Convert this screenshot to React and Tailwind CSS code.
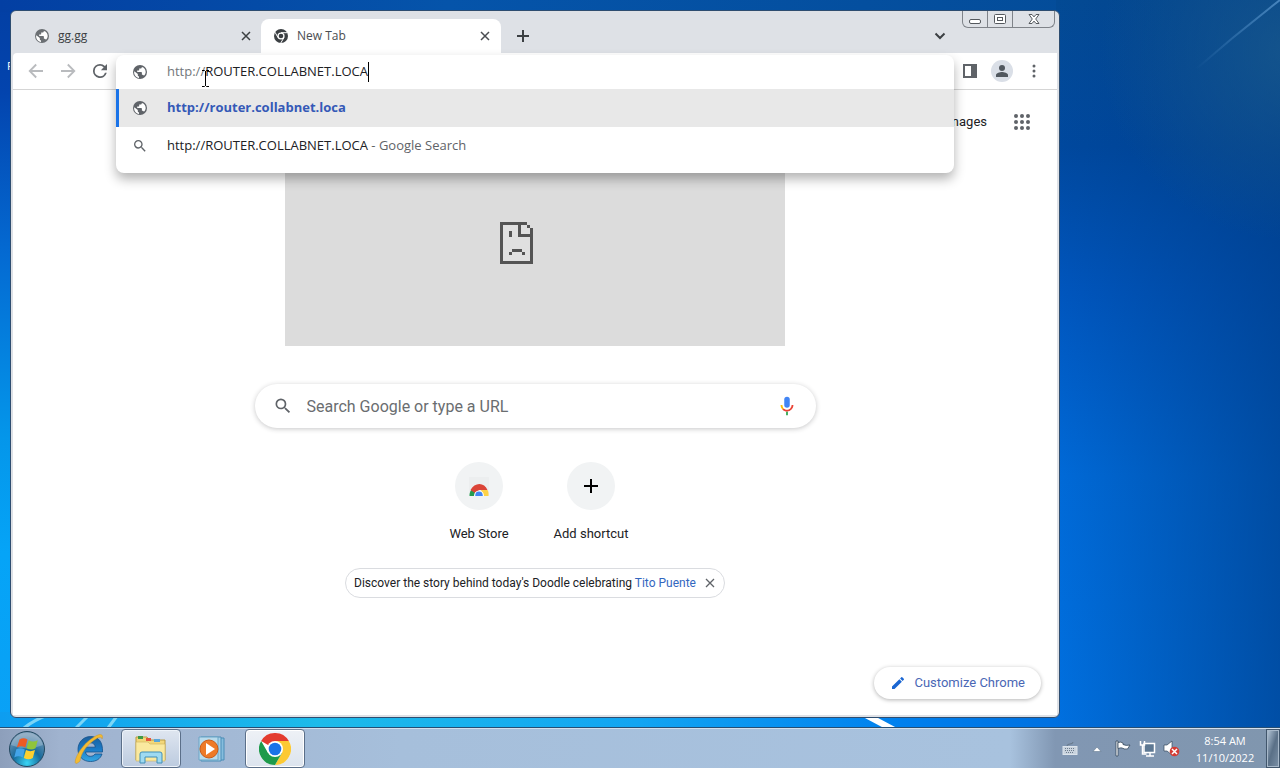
import React from "react";

const ui = "font-['Open_Sans','Noto_Sans',sans-serif]";

function Globe({ className }) {
  return (
    <svg viewBox="0 0 16 16" className={className} aria-hidden="true">
      <circle cx="8" cy="8" r="7" fill="currentColor" />
      <path d="M2.300 7.200 5.800 10v1.200c0 .7.500 1.200 1.200 1.200v1.500C4.100 13.500 2.100 11 2.100 8.200zM9.800 2.400v.8c0 .8-.6 1.300-1.300 1.300H7.200v1.400c0 .4-.3.7-.7.700H5.200v1.400h4c.4 0 .7.300.7.700v2h.6c.7 0 1.200.4 1.400 1 1.100-1 1.800-2.200 1.800-3.700 0-2.400-1.600-4.600-3.900-4.900z" fill="#fff" />
    </svg>
  );
}

function ChromeGlyph({ className }) {
  return (
    <svg viewBox="0 0 16 16" className={className} aria-hidden="true">
      <circle cx="8" cy="8" r="7" fill="#3c4043" />
      <circle cx="8" cy="8" r="3.600" fill="#fff" />
      <circle cx="8" cy="8" r="2.300" fill="#3c4043" />
      <path d="M8 4.700h6.300M5.100 9.700 2 4.200M10.900 9.700l-3.200 5.400" stroke="#fff" strokeWidth="1" fill="none" />
    </svg>
  );
}

function ChromeLogo({ className }) {
  return (
    <svg viewBox="0 0 32 32" className={className} aria-hidden="true">
      <circle cx="16" cy="16" r="16" fill="#fff" />
      <path d="M16 16 2.140 8A16 16 0 0 1 29.860 8z" fill="#e33b2e" />
      <path d="M16 8h13.860A16 16 0 0 1 16 32l6.930-12z" fill="#fcc934" />
      <path d="M22.930 20 16 32A16 16 0 0 1 2.140 8l6.930 12z" fill="#1e9a4b" />
      <circle cx="16" cy="16" r="8" fill="#fff" />
      <circle cx="16" cy="16" r="6.300" fill="#1a73e8" />
    </svg>
  );
}

function Magnifier({ className }) {
  return (
    <svg viewBox="0 0 24 24" className={className} fill="currentColor" aria-hidden="true">
      <path d="M15.500 14h-.79l-.28-.27A6.470 6.470 0 0 0 16 9.500 6.500 6.500 0 1 0 9.500 16c1.610 0 3.090-.59 4.230-1.570l.27.28v.79l5 4.990L20.490 19l-4.990-5zm-6 0C7.010 14 5 11.990 5 9.500S7.010 5 9.500 5 14 7.010 14 9.500 11.990 14 9.500 14z" />
    </svg>
  );
}

function Cross({ className }) {
  return (
    <svg viewBox="0 0 10 10" className={className} stroke="currentColor" aria-hidden="true">
      <path d="M1 1l8 8M9 1 1 9" />
    </svg>
  );
}

function Arrow({ className }) {
  return (
    <svg viewBox="0 0 16 16" className={className} fill="none" stroke="currentColor" strokeWidth="1.800" aria-hidden="true">
      <path d="M15 8H2M8.200 1.500 1.700 8l6.500 6.500" />
    </svg>
  );
}

function Wallpaper() {
  return (
    <svg className="absolute inset-0 h-full w-full" viewBox="0 0 1280 768" preserveAspectRatio="none" aria-hidden="true">
      <defs>
        <linearGradient id="base" x1="0" y1="0" x2="0" y2="1">
          <stop offset="0" stopColor="#033fa3" />
          <stop offset="0.120" stopColor="#0344ae" />
          <stop offset="0.330" stopColor="#046ad2" />
          <stop offset="0.570" stopColor="#0496ea" />
          <stop offset="0.720" stopColor="#05a4f7" />
          <stop offset="1" stopColor="#0ba0f5" />
        </linearGradient>
        <linearGradient id="top" x1="0" y1="0" x2="1" y2="0">
          <stop offset="0" stopColor="#033fa3" />
          <stop offset="0.350" stopColor="#0554aa" />
          <stop offset="1" stopColor="#034a94" />
        </linearGradient>
        <linearGradient id="side" x1="0" y1="0" x2="0" y2="1">
          <stop offset="0" stopColor="#034a94" />
          <stop offset="0.200" stopColor="#00489e" />
          <stop offset="0.400" stopColor="#0056be" />
          <stop offset="0.650" stopColor="#006ad8" />
          <stop offset="1" stopColor="#0070e0" />
        </linearGradient>
        <linearGradient id="edge" x1="0" y1="0" x2="1" y2="0">
          <stop offset="0" stopColor="#003c86" stopOpacity="0" />
          <stop offset="1" stopColor="#003c86" stopOpacity="0.650" />
        </linearGradient>
        <radialGradient id="glow" gradientUnits="userSpaceOnUse" cx="1290" cy="50" r="190">
          <stop offset="0" stopColor="#1c5c8c" stopOpacity="0.700" />
          <stop offset="1" stopColor="#1c5c8c" stopOpacity="0" />
        </radialGradient>
        <linearGradient id="ray" gradientUnits="userSpaceOnUse" x1="1195" y1="68" x2="1280" y2="0">
          <stop offset="0" stopColor="#5f9bd2" stopOpacity="0" />
          <stop offset="1" stopColor="#5f9bd2" />
        </linearGradient>
        <linearGradient id="low" x1="0" y1="0" x2="1" y2="0">
          <stop offset="0" stopColor="#0d9df0" />
          <stop offset="0.300" stopColor="#1dbbea" />
          <stop offset="0.600" stopColor="#12a5f2" />
          <stop offset="0.850" stopColor="#0080ee" />
          <stop offset="1" stopColor="#0070e0" />
        </linearGradient>
      </defs>
      <rect width="1280" height="768" fill="url(#base)" />
      <rect width="1280" height="12" fill="url(#top)" />
      <rect y="712" width="1060" height="20" fill="url(#low)" />
      <rect x="1056" width="224" height="732" fill="url(#side)" />
      <rect x="1056" width="224" height="732" fill="url(#edge)" />
      <rect x="1056" width="224" height="732" fill="url(#glow)" />
      <path d="M1195 70Q1236 34 1280 0" stroke="url(#ray)" strokeWidth="2" fill="none" opacity="0.700" />
      <path d="M24 728Q34 720 50 714M108 728l9-12M76 728l12-12" stroke="#a9eafa" strokeWidth="3" fill="none" opacity="0.700" />
      <path d="M864 714l32 17" stroke="#fff" strokeWidth="6" />
    </svg>
  );
}

function TabStrip() {
  return (
    <header className="flex h-[42px] items-end pl-[7px]">
      <div className="flex h-[34px] w-[241px] items-center gap-2 pr-[7px] pl-[14px] text-[#3c4043]">
        <Globe className="size-4 text-[#6b6f73]" />
        <span className={`flex-1 text-xs ${ui}`}>gg.gg</span>
        <button aria-label="Close gg.gg" className="grid size-4 place-items-center">
          <Cross className="size-[10px] stroke-[1.500]" />
        </button>
      </div>
      <div className="flex h-[34px] w-[240px] items-center gap-2 rounded-t-lg bg-white pr-2 pl-3 text-[#4a4d51]">
        <ChromeGlyph className="size-4" />
        <span className={`flex-1 text-xs ${ui}`}>New Tab</span>
        <button aria-label="Close New Tab" className="grid size-4 place-items-center">
          <Cross className="size-[10px] stroke-[1.500]" />
        </button>
      </div>
      <button aria-label="New tab" className="ml-2 grid h-[34px] w-7 place-items-center text-[#3c4043]">
        <svg viewBox="0 0 12 12" className="size-3 stroke-current stroke-2"><path d="M6 0v12M0 6h12" /></svg>
      </button>
      <div className="flex-1" />
      <button aria-label="Search tabs" className="grid h-[34px] w-7 place-items-center text-[#3c4043]">
        <svg viewBox="0 0 12 8" className="h-2 w-3 fill-none stroke-current stroke-2"><path d="M1.500 1.500 6 6l4.500-4.500" /></svg>
      </button>
      <div className="mr-[2px] ml-2 flex h-[17px] self-start rounded-b-md border border-t-0 border-[#7f8389] text-[#55595e]">
        <button aria-label="Minimize" className="grid w-[25px] place-items-center border-r border-[#7f8389]">
          <svg viewBox="0 0 14 12" className="h-3 w-[14px] fill-white stroke-current"><rect x="1.500" y="6.500" width="11" height="4" rx="1.500" /></svg>
        </button>
        <button aria-label="Maximize" className="grid w-[25px] place-items-center border-r border-[#7f8389]">
          <svg viewBox="0 0 14 12" className="h-3 w-[14px] fill-white stroke-current"><rect x="1.500" y="1.500" width="11" height="9" rx="1" /><rect x="4.500" y="4.500" width="5" height="3" /></svg>
        </button>
        <button aria-label="Close window" className="grid w-[41px] place-items-center">
          <svg viewBox="0 0 12 12" className="size-3 fill-white stroke-current"><path d="M1 1.500h3l2 2.400 2-2.400h3L7.700 6l3.300 4.500H8L6 8.100l-2 2.400H1L4.300 6z" /></svg>
        </button>
      </div>
    </header>
  );
}

function Omnibox() {
  return (
    <div className="relative h-full flex-1">
      <div className={`absolute inset-x-0 top-[2px] z-10 rounded-lg bg-white pb-2 text-[13px] text-[#202124] shadow-[0_6px_12px_rgba(0,0,0,0.3)] ${ui}`}>
        <label className="flex h-[34px] items-center gap-[19px] pr-4 pb-px pl-4">
          <Globe className="size-4 text-[#5f6368]" />
          <span className="relative flex-1">
            <span aria-hidden="true" className="pointer-events-none absolute inset-0 flex items-center">
              <span className="text-[#73777b]">http://</span>ROUTER.COLLABNET.LOCA<span className="h-5 w-px bg-black" />
            </span>
            <input aria-label="Address and search bar" defaultValue="http://ROUTER.COLLABNET.LOCA" className="block w-full bg-transparent text-transparent outline-none" />
          </span>
        </label>
        <a href="#go" className="flex h-[38px] items-center gap-[19px] border-l-3 border-[#1a73e8] bg-[#e8e8e8] pl-[13px] font-bold text-[#3559b7]">
          <Globe className="size-4 text-[#5f6368]" />
          http://router.collabnet.loca
        </a>
        <a href="#search" className="flex h-[38px] items-center gap-[19px] pl-4">
          <Magnifier className="size-4 text-[#5f6368]" />
          <span>http://ROUTER.COLLABNET.LOCA <span className="text-[#5f6368]">- Google Search</span></span>
        </a>
      </div>
      <svg viewBox="0 0 9 17" className="absolute top-[17px] left-[85px] z-20 h-[17px] w-[9px]" fill="none" stroke="#000" aria-hidden="true">
        <path d="M1 .5h2.500l1 1 1-1H8M4.500 1v15M1 16.500h2.500l1-1 1 1H8" />
      </svg>
    </div>
  );
}

function Toolbar() {
  return (
    <nav className="flex h-[37px] items-center rounded-tl border-b border-[#d5d5d5] bg-white pl-[7px] text-[#5f6368]">
      <button aria-label="Back" className="grid w-8 place-items-center text-[#b9bbbe]"><Arrow className="size-4" /></button>
      <button aria-label="Forward" className="grid w-8 place-items-center text-[#b9bbbe]"><Arrow className="size-4 rotate-180" /></button>
      <button aria-label="Reload" className="grid w-8 place-items-center">
        <svg viewBox="4 4 16 16" className="size-[14px] fill-current"><path d="M17.650 6.350A7.950 7.950 0 0 0 12 4a8 8 0 1 0 7.730 10h-2.080A6 6 0 1 1 12 6c1.660 0 3.140.69 4.220 1.780L13 11h7V4z" /></svg>
      </button>
      <Omnibox />
      <button aria-label="Side panel" className="grid w-8 place-items-center">
        <svg viewBox="0 0 14 14" className="size-[14px]"><path fill="currentColor" fillRule="evenodd" d="M0 0h14v14H0zM2 2v10h6V2z" /></svg>
      </button>
      <button aria-label="Profile" className="grid w-8 place-items-center">
        <span className="grid size-[22px] place-items-center rounded-full bg-[#dadfe7]">
          <svg viewBox="0 0 14 14" className="size-[14px] fill-[#51585f]"><circle cx="7" cy="4" r="3" /><path d="M1 13v-2c0-2 4-3 6-3s6 1 6 3v2z" /></svg>
        </span>
      </button>
      <button aria-label="Menu" className="mr-[7px] grid w-8 place-items-center">
        <svg viewBox="0 0 4 14" className="h-[14px] w-1 fill-current"><circle cx="2" cy="2" r="1.500" /><circle cx="2" cy="7" r="1.500" /><circle cx="2" cy="12" r="1.500" /></svg>
      </button>
    </nav>
  );
}

function NewTabPage() {
  return (
    <main className="flex flex-1 flex-col items-center bg-white font-[Roboto,sans-serif] text-[13px] text-[#202124]">
      <div className="flex h-[64px] w-full items-center justify-end gap-[27px] pr-[27px]">
        <a href="#images">Images</a>
        <button aria-label="Google apps">
          <svg viewBox="0 0 16 16" className="size-4 fill-[#5f6368]">
            {[2, 8, 14].map((y) => [2, 8, 14].map((x) => <circle key={`${x}-${y}`} cx={x} cy={y} r="2" />))}
          </svg>
        </button>
      </div>
      <div className="flex h-[192px] w-[500px] justify-center bg-[#dcdcdc] pt-[67px] pr-[38px]">
        <svg viewBox="0 0 33 44" className="h-[44px] w-[33px]" shapeRendering="crispEdges" aria-hidden="true">
          <path d="M0 1h27v3h3v3h3v36H0z" fill="#545454" />
          <path d="M3 4h15v12h12v24H3z" fill="#e0e0e0" />
          <path d="M21 4h6v3h3v6h-9z" fill="#e0e0e0" />
          <path d="M9 10h3v6H9zM12 28h10v3H12zM9 31h3v3H9zM22 31h3v3h-3z" fill="#545454" />
        </svg>
      </div>
      <label className="mt-[38px] flex h-[44px] w-[561px] items-center gap-[14px] rounded-full bg-white px-[18px] shadow-[0_1px_5px_rgba(32,33,36,0.25)]">
        <Magnifier className="size-5 text-[#5f6368]" />
        <input aria-label="Search" placeholder="Search Google or type a URL" className="min-w-0 flex-1 pt-[2px] text-base outline-none placeholder:text-[#6a6d70]" />
        <button aria-label="Search by voice">
          <svg viewBox="0 0 24 24" className="size-[22px]">
            <rect x="9" y="2" width="6" height="12" rx="3" fill="#4285f4" />
            <path d="M11 18h2v4h-2z" fill="#34a853" />
            <path d="M5 11h2c0 1.500.5 2.700 1.500 3.600L7 16c-1.200-1.300-2-3-2-5z" fill="#fbbc04" />
            <path d="M7 16l1.500-1.400c2 2 5 1.900 7 0 1-1 1.500-2.100 1.500-3.600h2c0 3.900-3.100 7-7 7-2 0-3.700-.7-5-2z" fill="#ea4335" />
          </svg>
        </button>
      </label>
      <div className="mt-[34px] flex">
        <a href="#store" className="flex w-28 flex-col items-center gap-[14px]">
          <span className="grid size-12 place-items-center rounded-full bg-[#f1f3f4]">
            <svg viewBox="0 0 24 24" className="size-6" aria-hidden="true">
              <path d="M2 3h20v15a3 3 0 0 1-3 3H5a3 3 0 0 1-3-3z" fill="#eceeef" />
              <path d="M2.500 22a10 10 0 0 1 3.500-8l3 5-1 3z" fill="#259b50" />
              <path d="M3.500 16C7.500 8 17.500 8 20.500 16h-8l-4.500 3z" fill="#db4437" />
              <path d="M14 16h6.500c1 1.500 1.300 3.500 1 6H16z" fill="#fdd248" />
              <path d="M7 22a5 5.500 0 0 1 10 0z" fill="#fff" />
              <path d="M8.200 22a3.800 4.400 0 0 1 7.600 0z" fill="#4285f4" />
            </svg>
          </span>
          <span className="leading-5">Web Store</span>
        </a>
        <button className="flex w-28 flex-col items-center gap-[14px]">
          <span className="grid size-12 place-items-center rounded-full bg-[#f1f3f4]">
            <svg viewBox="0 0 14 14" className="size-[14px] stroke-black stroke-2"><path d="M7 0v14M0 7h14" /></svg>
          </span>
          <span className="leading-5">Add shortcut</span>
        </button>
      </div>
      <div className="mt-[24px] flex h-[30px] items-center rounded-full border border-[#dadce0] px-2 text-xs">
        <span>Discover the story behind today's Doodle celebrating <a href="#doodle" className="text-[#3367c0]">Tito Puente</a></span>
        <button aria-label="Dismiss" className="ml-2 grid size-3 place-items-center text-[#5f6368]"><Cross className="size-[10px] stroke-[1.300]" /></button>
      </div>
      <button className="mt-auto mr-4 mb-4 flex h-8 items-center gap-2 self-end rounded-full bg-white px-4 text-[#4a67b5] shadow-[0_1px_4px_rgba(0,0,0,0.3)]">
        <svg viewBox="0 0 24 24" className="size-4 fill-[#1a66d2]"><path d="M3 17.250V21h3.750L17.810 9.940l-3.750-3.750zM20.710 7.040a1 1 0 0 0 0-1.410l-2.340-2.340a1 1 0 0 0-1.410 0l-1.830 1.830 3.750 3.750z" /></svg>
        Customize Chrome
      </button>
    </main>
  );
}

function StartOrb() {
  return (
    <svg viewBox="0 0 38 38" className="size-[38px]" aria-hidden="true">
      <defs>
        <radialGradient id="orb" cx="0.500" cy="0.900" r="0.800">
          <stop offset="0" stopColor="#39d5f5" />
          <stop offset="0.500" stopColor="#176b9c" />
          <stop offset="1" stopColor="#6f94b3" />
        </radialGradient>
      </defs>
      <circle cx="19" cy="19" r="17.500" fill="url(#orb)" stroke="#23485f" />
      <path d="M3 15a16.500 16.500 0 0 1 32 0Q19 22 3 15z" fill="#fff" opacity="0.250" />
      <path d="M11.500 9.500q4-2.500 8 0l-2.200 8q-4-2.300-8.500 0z" fill="#ee5a24" />
      <path d="M20.800 10.200q4 2.500 9 0l-2.300 8q-4 2.500-9 0z" fill="#8fc43c" />
      <path d="M8.300 19.200q4-2.200 8.500.2L14.700 27.500q-4-2.300-8.500 0z" fill="#43a4e8" />
      <path d="M18 20q4 2.300 9 0l-2.200 8q-4 2.500-9 0z" fill="#fcd02f" />
    </svg>
  );
}

function Taskbar() {
  return (
    <footer className="relative flex h-10 items-center border-t border-[#d3e0ed] bg-[linear-gradient(90deg,#8d9fbb_0px,#a0b3cf_60px,#a6bfdb_400px,#a8c2de_calc(100%-270px),#8197b3_calc(100%-225px),#8096ae_100%)] shadow-[0_-1px_0_#254e74]">
      <button aria-label="Start" className="ml-2"><StartOrb /></button>
      <button aria-label="Internet Explorer" className="ml-6 grid w-[38px] place-items-center">
        <svg viewBox="0 0 34 34" className="size-[34px]" aria-hidden="true">
          <defs>
            <linearGradient id="ie" x1="0" y1="0" x2="0" y2="1">
              <stop offset="0" stopColor="#1c5f9c" />
              <stop offset="0.500" stopColor="#1a7ac6" />
              <stop offset="1" stopColor="#35a7e2" />
            </linearGradient>
          </defs>
          <path d="M30.500 20H13.500c.5 3 2.500 4.300 5 4.300 2 0 3.500-.8 4.500-2.300h7c-1.500 5-6 7.500-11.500 7.500-7.500 0-12.500-5-12.500-12s5-13 12.700-13C26.500 4.500 31 10 30.500 20zM13.500 15.200h9.800c-.3-3-2.200-4.400-4.800-4.400-2.700 0-4.500 1.400-5 4.400z" fill="url(#ie)" stroke="#14508a" strokeWidth=".8" />
          <path d="M8 29C-2 39 4 16 22 5c6-4 10-3 8 2 0-3-4-2-9 2C13 15 9 22 8 29z" fill="#f3bb32" stroke="#c9952d" strokeWidth=".5" />
        </svg>
      </button>
      <button aria-label="Windows Explorer" className="ml-[13px] grid h-[39px] w-[60px] place-items-center rounded-sm border border-[#5b6f89] bg-gradient-to-b from-[#dfe6f0] to-[#bccbdf] shadow-[inset_0_0_0_1px_#edf3fa]">
        <svg viewBox="0 0 34 30" className="h-[30px] w-[34px]" aria-hidden="true">
          <path d="M2 3h11l2 3h16v20H2z" fill="#f3d77a" stroke="#b99b45" />
          <path d="M4 2h5v3H4z" fill="#3f9a46" /><path d="M12 4h5v3h-5z" fill="#e4533c" /><path d="M20 5h6v3h-6z" fill="#5aa6d8" />
          <path d="M2 8h12l2 2h15v17H2z" fill="#fae99f" stroke="#cdb25b" strokeWidth=".6" />
          <path d="M6 29V20q0-2 2-2h18q2 0 2 2v9h-5v-6H11v6z" fill="#9edaf1" stroke="#418fb8" />
        </svg>
      </button>
      <button aria-label="Windows Media Player" className="ml-[14px] grid w-[34px] place-items-center">
        <svg viewBox="0 0 28 26" className="h-[26px] w-7" aria-hidden="true">
          <path d="M5 2h21v22H5z" fill="#86bddd" stroke="#4b8db7" /><path d="M3 1h20v24H3z" fill="#a6d0e7" stroke="#4b8db7" /><path d="M1 1h19v23H1z" fill="#b9dbec" stroke="#6ba5c6" />
          <circle cx="11" cy="13" r="9" fill="#ee7a27" stroke="#ca5b17" /><path d="m8 7 9 6-9 6z" fill="#fff" />
        </svg>
      </button>
      <button aria-label="Google Chrome" className="ml-[16px] grid h-[39px] w-[60px] place-items-center rounded-sm border border-[#5b6f89] bg-gradient-to-b from-[#eef1f6] to-[#dce4ee] shadow-[inset_0_0_0_1px_#ffffff]">
        <ChromeLogo className="size-8" />
      </button>
      <div className="flex-1" />
      <div className="flex items-center text-white">
        <button aria-label="Keyboard" className="mr-[14px]">
          <svg viewBox="0 0 16 14" className="h-[14px] w-4" aria-hidden="true"><path d="M5 4q0-2 3-2t3-2" stroke="#667789" fill="none" /><rect x="1" y="4.500" width="14" height="8" fill="#c9d3de" stroke="#dbe3eb" /><path d="M3 6.500h10M3 8.500h10M4 10.500h8" stroke="#6c7c8d" strokeDasharray="1 1" /></svg>
        </button>
        <button aria-label="Show hidden icons" className="mr-[12px]">
          <svg viewBox="0 0 10 6" className="h-[6px] w-[10px]"><path d="M1 5.500 5 1l4 4.500z" fill="#fff" stroke="#526b82" strokeWidth=".5" /></svg>
        </button>
        <button aria-label="Action Center" className="mr-[8px]">
          <svg viewBox="0 0 17 17" className="size-[17px]"><path d="M2 1h2v15H2z" fill="#fff" stroke="#33475b" strokeWidth=".8" /><path d="M4 2.500q3-1 5 .5v1.500q3 1.500 7 .5l-2.500 4q-3 .5-5.500-1V8Q7 7.500 4 8.500z" fill="#fff" stroke="#33475b" strokeWidth=".8" /></svg>
        </button>
        <button aria-label="Network" className="mr-[7px]">
          <svg viewBox="0 0 17 17" className="size-[17px]"><rect x="5" y="3.500" width="10.500" height="9" fill="#5d7893" stroke="#fff" strokeWidth="1.500" /><path d="M7 16h8M11 13v3M1.500 1v4h4V1M3.500 5v9h4" stroke="#fff" strokeWidth="1.500" fill="none" /></svg>
        </button>
        <button aria-label="Volume muted" className="mr-[14px]">
          <svg viewBox="0 0 17 17" className="size-[17px]"><path d="M1 5h3l5-4v14l-5-4H1z" fill="#fff" stroke="#33475b" strokeWidth=".7" /><circle cx="11.500" cy="11.500" r="4.800" fill="#d43c34" /><path d="m9 9 5 5M14 9l-5 5" stroke="#fff" strokeWidth="1.500" /></svg>
        </button>
        <time className={`w-[62px] text-center text-[11px] leading-[17px] ${ui}`}>8:54 AM<br />11/10/2022</time>
        <button aria-label="Show desktop" className="ml-[10px] h-[39px] w-[14px] border border-[#41566c] bg-gradient-to-br from-[#b8c9da] via-[#5a7087] to-[#7c91a7] shadow-[inset_0_0_0_1px_#a7b8c9]" />
      </div>
    </footer>
  );
}

export default function App() {
  return (
    <div className="relative flex min-h-screen flex-col overflow-hidden bg-[#0455bf]">
      <Wallpaper />
      <span className={`absolute top-[58px] left-[7px] text-[11px] text-white ${ui}`}>R</span>
      <section aria-label="Browser" className="relative mt-[10px] mr-[220px] mb-[10px] ml-[10px] flex flex-1 flex-col rounded-md border border-[#2e4d70] bg-[#dee1e6] px-[2px] pb-[2px]">
        <TabStrip />
        <Toolbar />
        <NewTabPage />
      </section>
      <Taskbar />
    </div>
  );
}
